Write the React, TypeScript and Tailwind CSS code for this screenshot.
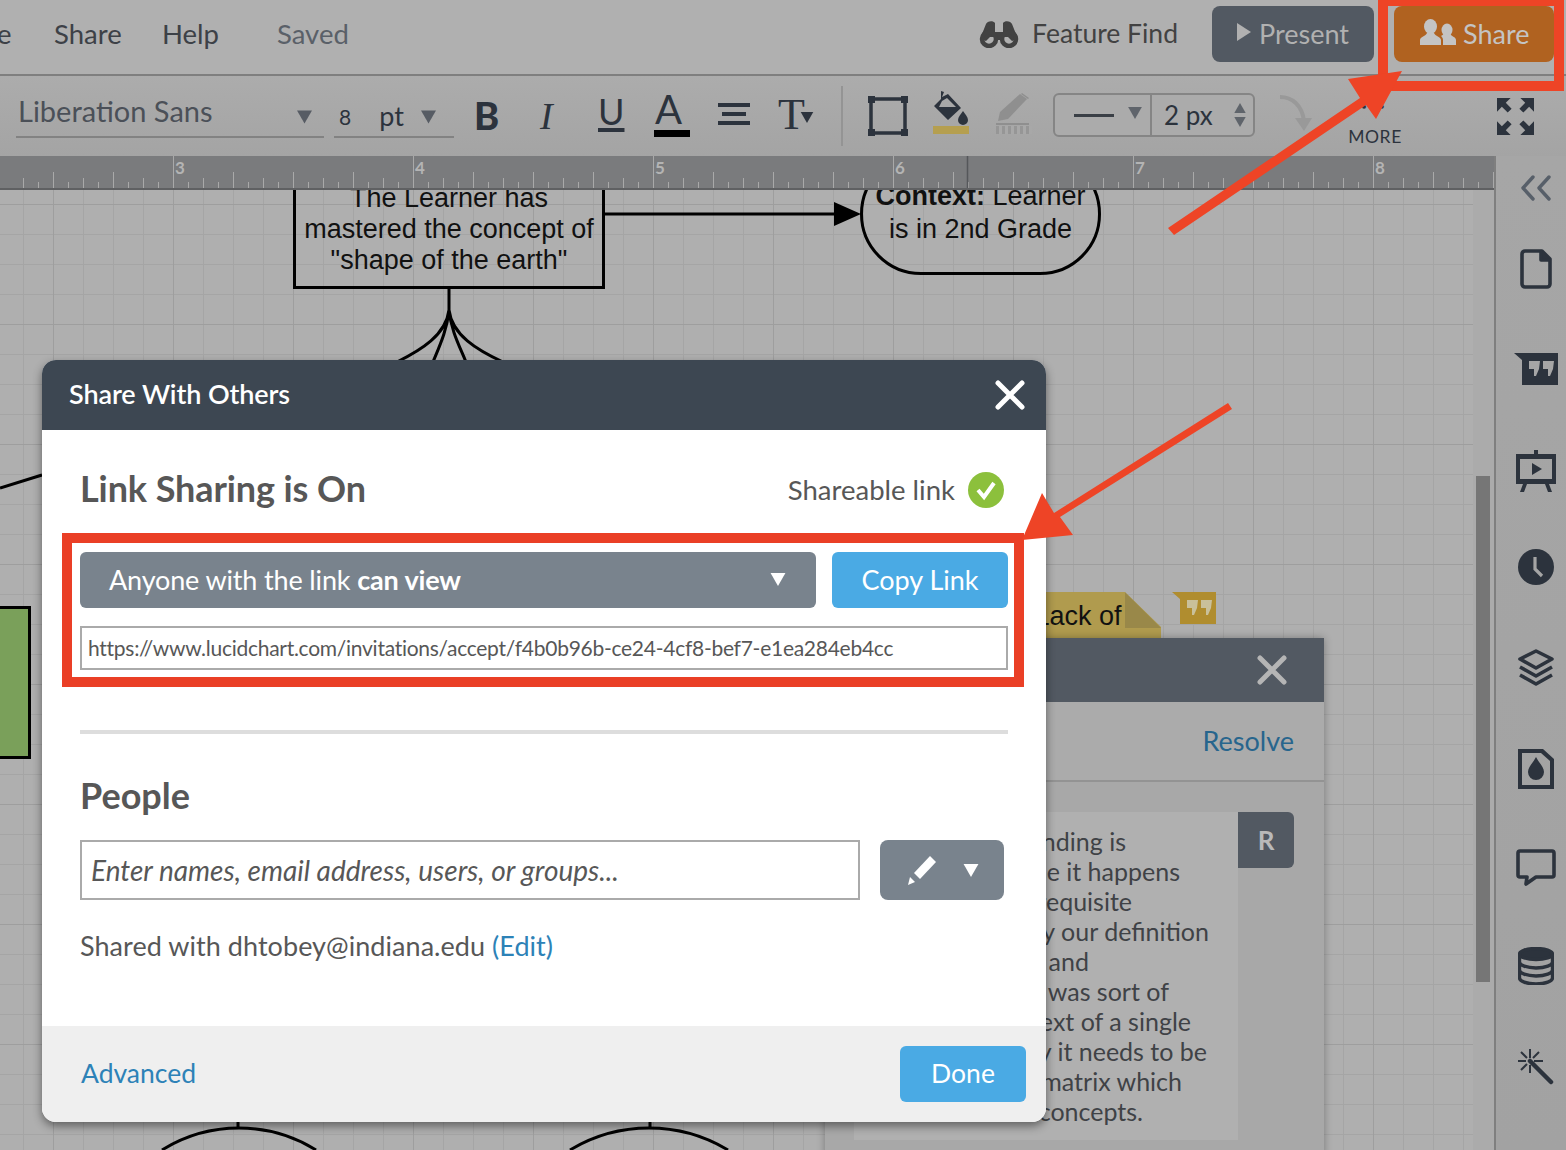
import React from 'react';

const ink = '#2c333d';

const Caret = ({ className }: { className: string }) => (
  <svg viewBox="0 0 16 14" className={className} fill="currentColor">
    <path d="M0 0h16L8 14z" />
  </svg>
);

const rulerTicks = Array.from({ length: 100 }, (_, i) => 23 + i * 15);

const Ruler = () => (
  <div className="relative h-[34px] bg-[#7a7b7d] border-b-[2px] border-[#5f6062]">
    <svg className="absolute left-0 top-0 w-[1494px] h-[32px]" viewBox="0 0 1494 32">
      {rulerTicks.map((x) => {
        const inch = (x - 173) % 240 === 0;
        const major = (x - 173) % 60 === 0;
        const half = (x - 173) % 30 === 0;
        return (
          <line
            key={x}
            x1={x + 0.5}
            x2={x + 0.5}
            y1={inch ? 0 : major ? 16 : half ? 22 : 26}
            y2={32}
            stroke="#a9a9a9"
          />
        );
      })}
      <line x1="967.5" x2="967.5" y1="0" y2="32" stroke="#55575a" strokeWidth="1.5" />
    </svg>
    {[
      ['3', 'left-[175px]'],
      ['4', 'left-[415px]'],
      ['5', 'left-[655px]'],
      ['6', 'left-[895px]'],
      ['7', 'left-[1135px]'],
      ['8', 'left-[1375px]'],
    ].map(([n, pos]) => (
      <span key={n} className={`absolute top-0 ${pos} text-[17px] leading-[24px] font-bold text-[#b4b4b4]`}>
        {n}
      </span>
    ))}
  </div>
);

const TopBar = () => (
  <header className="h-[76px] shrink-0 bg-[#b0b0b0] border-b-[2px] border-[#7f7f7f] flex items-start text-[#3d4147] text-[27.5px]">
    <span className="w-[54px] h-[68px] leading-[68px] -ml-[3px] overflow-hidden">e</span>
    <span className="w-[108px] h-[68px] leading-[68px] ml-[3px]">Share</span>
    <span className="w-[115px] h-[68px] leading-[68px]">Help</span>
    <span className="h-[68px] leading-[68px] text-[#5a6068]">Saved</span>
    <div className="ml-auto flex items-center h-[56px] mt-[6px] mr-[12px]">
      <svg viewBox="0 0 40 28" className="w-[40px] h-[28px] mr-[13px] -mt-[1px]" fill="#424242">
        <path d="M1 19L7 4c1-3 7-4 9-1v9h8V3c2-3 8-2 9 1l6 15-6 2-4-4h-6l-2 3h-4l-2-3H11l-4 4z" />
        <circle cx="10" cy="19" r="7" fill="none" stroke="#424242" strokeWidth="4.5" />
        <circle cx="30" cy="19" r="7" fill="none" stroke="#424242" strokeWidth="4.5" />
      </svg>
      <span className="mr-[34px] text-[#424242] text-[26.500px]">Feature Find</span>
      <button className="w-[162px] h-[56px] rounded-[8px] bg-[#525962] text-[#b1b1b1] text-[27px] flex items-center pl-[25px]">
        <svg viewBox="0 0 14 18" className="w-[14px] h-[18px] mr-[8px] -mt-[4px]" fill="currentColor">
          <path d="M0 0l14 9-14 9z" />
        </svg>
        <span>Present</span>
      </button>
      <button className="ml-[20px] w-[160px] h-[56px] rounded-[8px] bg-[#b06220] text-[#c4c4c4] text-[27px] flex items-center pl-[26px]">
        <svg viewBox="0 0 36 26" className="w-[36px] h-[26px] mr-[7px] -mt-[4px]" fill="currentColor">
          <ellipse cx="10.500" cy="7.500" rx="6.500" ry="7.500" />
          <path d="M0 26v-5c0-3 6-4 7-7h7c1 3 7 4 7 7v5z" />
          <ellipse cx="27" cy="11" rx="5.500" ry="6.500" />
          <path d="M23 26v-5c0-2-1-3-2-4l3-2h6c1 2 6 3 6 6v5z" />
        </svg>
        <span>Share</span>
      </button>
    </div>
  </header>
);

const ToolBar = () => (
  <div className="h-[80px] shrink-0 bg-[linear-gradient(#acacac,#a4a4a4)] flex items-start relative text-[#2c333d]">
    <div className="ml-[16px] mt-[17px] w-[308px] h-[45px] border-b-[2px] border-[#828282] flex items-start justify-between text-[#4b5058] text-[29px] pl-[2px] pr-[12px]">
      <span className="leading-[35px]">Liberation Sans</span>
      <Caret className="w-[15px] h-[14px] mt-[17px] text-[#575c64]" />
    </div>
    <div className="ml-[10px] mt-[17px] w-[120px] h-[45px] border-b-[2px] border-[#828282] flex items-start">
      <span className="ml-[5px] mt-[10px] text-[21px] leading-[28px]">8</span>
      <span className="ml-[28px] mt-[4px] text-[27px] leading-[38px]">pt</span>
      <Caret className="w-[15px] h-[14px] mt-[17px] ml-[17px] text-[#575c64]" />
    </div>
    <span className="ml-[20px] mt-[16px] text-[38px] leading-[46px] font-black w-[66px]">B</span>
    <span className="mt-[17px] font-['Liberation_Serif',serif] italic text-[38px] leading-[46px] w-[58px]">I</span>
    <span className="mt-[13px] text-[36px] leading-[44px] w-[56px] underline decoration-[4px] underline-offset-[3px]">U</span>
    <div className="mt-[11px] w-[64px] flex flex-col">
      <span className="text-[40px] leading-[44px] pl-[1px]">A</span>
      <span className="block w-[36px] h-[7px] -mt-[1px] bg-black" />
    </div>
    <div className="mt-[27px] w-[60px] flex flex-col gap-[5px]">
      <span className="block w-[32px] h-[4px] bg-[#2c333d]" />
      <span className="block w-[24px] h-[4px] bg-[#2c333d] ml-[4px]" />
      <span className="block w-[32px] h-[4px] bg-[#2c333d]" />
    </div>
    <div className="mt-[14px] w-[63px] flex items-start">
      <span className="font-['Liberation_Serif',serif] text-[44px] leading-[50px]">T</span>
      <Caret className="w-[16px] h-[11px] mt-[22px] -ml-[6px]" />
    </div>
    <span className="block w-[2px] h-[60px] mt-[10px] bg-[#949494]" />
    <svg viewBox="0 0 40 40" className="ml-[25px] mt-[20px] w-[40px] h-[40px]" fill="none" stroke={ink}>
      <rect x="3" y="3" width="34" height="34" strokeWidth="3.5" />
      <path d="M0 0h7v7H0zM33 0h7v7h-7zM0 33h7v7H0zM33 33h7v7h-7z" fill={ink} stroke="none" />
    </svg>
    <div className="ml-[25px] mt-[13px] w-[36px] flex flex-col">
      <svg viewBox="0 0 36 36" className="w-[36px] h-[36px]" fill={ink}>
        <path d="M8 2l3 1-2 5 6-3 13 14-13 12L1 17l7-7z" />
        <path d="M30 22c2 3 5 6 5 9a5 5 0 0 1-10 0c0-3 3-6 5-9z" />
        <path d="M9 12l5-3 9 9H6z" fill="#a8a8a8" />
      </svg>
      <span className="block w-[36px] h-[8px] mt-[1px] bg-[#b59f50]" />
    </div>
    <div className="ml-[27px] mt-[16px] w-[36px] flex flex-col">
      <svg viewBox="0 0 36 28" className="w-[36px] h-[30px]" fill="#8f8f8f">
        <path d="M24 1l7 5-19 20-10 2 2-9z" />
        <path d="M26 0l7 5-1 1-7-5z" />
      </svg>
      <span className="block w-[33px] h-[2px] mt-[1px] bg-[#8f8f8f]" />
      <span className="block w-[36px] h-[8px] mt-[1px] bg-[repeating-linear-gradient(90deg,#969696_0,#969696_3px,#a8a8a8_3px,#a8a8a8_6px)]" />
    </div>
    <div className="ml-[21px] mt-[17px] w-[202px] h-[44px] rounded-[6px] border-[2px] border-[#858585] bg-[#ababab] flex items-stretch">
      <div className="w-[97px] border-r-[2px] border-[#858585] flex items-center pl-[19px]">
        <span className="block w-[40px] h-[3px] bg-[#3a3f46]" />
        <Caret className="w-[16px] h-[12px] ml-[13px] -mt-[4px] text-[#5f646b]" />
      </div>
      <div className="flex-1 flex items-center pl-[12px] text-[26px]">
        <span className="flex-1 mt-[1px]">2 px</span>
        <div className="flex flex-col gap-[4px] mr-[7px]">
          <Caret className="w-[12px] h-[10px] rotate-180 text-[#5f646b]" />
          <Caret className="w-[12px] h-[10px] text-[#5f646b]" />
        </div>
      </div>
    </div>
    <svg viewBox="0 0 34 40" className="ml-[24px] mt-[18px] w-[34px] h-[40px]" fill="none">
      <path d="M1 3c12 0 22 8 24 24" stroke="#999" strokeWidth="4" />
      <path d="M16 24h17l-8 13z" fill="#999" />
    </svg>
    <div className="ml-[35px] mt-[22px] w-[54px] flex flex-col items-center">
      <span className="text-[8px] leading-[16px] tracking-[4px]">●●●</span>
      <span className="text-[17.500px] leading-[24px] tracking-[0.6px] mt-[11px] whitespace-nowrap">MORE</span>
    </div>
    <svg viewBox="0 0 38 38" className="ml-[95px] mt-[22px] w-[37px] h-[37px]" fill={ink}>
      <path d="M0 0h14l-5 5 6 6-4 4-6-6-5 5zM38 0v14l-5-5-6 6-4-4 6-6-5-5zM0 38V24l5 5 6-6 4 4-6 6 5 5zM38 38H24l5-5-6-6 4-4 6 6 5-5z" />
    </svg>
  </div>
);

const SideIcon = ({ children, className }: { children: React.ReactNode; className: string }) => (
  <div className={`w-[60px] flex items-center justify-center ${className}`}>{children}</div>
);

const SideBar = () => (
  <aside className="w-[72px] shrink-0 border-l-[2px] border-[#7f7f7f] bg-[linear-gradient(#a6a6a6,#a2a2a2)] flex flex-col pl-[10px] pt-[14px]">
    <SideIcon className="h-[36px] mb-[43px]">
      <svg viewBox="0 0 32 26" className="w-[32px] h-[26px]" fill="none" stroke="#575f69" strokeWidth="3.4" strokeLinecap="round" strokeLinejoin="round">
        <path d="M13 2L3 13l10 11M29 2L19 13l10 11" />
      </svg>
    </SideIcon>
    <SideIcon className="h-[40px] mb-[60px]">
      <svg viewBox="0 0 32 40" className="w-[32px] h-[40px]" fill="none" stroke={ink} strokeWidth="3.6" strokeLinejoin="round">
        <path d="M5 2h17l8 8v25a3 3 0 0 1-3 3H5a3 3 0 0 1-3-3V5a3 3 0 0 1 3-3z" />
        <path d="M21 2v9h9" fill={ink} />
      </svg>
    </SideIcon>
    <SideIcon className="h-[40px] mb-[60px]">
      <svg viewBox="0 0 44 32" className="w-[44px] h-[32px]" fill={ink}>
        <path d="M0 0h44v32H8V7z" />
        <path d="M15 8h11l-1 8-3 7h-2v-7h-5zM29 8h11l-1 8-3 7h-2v-7h-5z" fill="#a6a6a6" />
      </svg>
    </SideIcon>
    <SideIcon className="h-[44px] mb-[56px]">
      <svg viewBox="0 0 40 42" className="w-[40px] h-[42px]" fill={ink}>
        <rect x="18" y="0" width="4" height="6" />
        <path d="M0 4h40v30H0zM4 9v20h32V9z" fillRule="evenodd" />
        <path d="M16 13l10 6-10 6z" />
        <path d="M7 34h4l-3 8H4zM29 34h4l3 8h-4z" />
      </svg>
    </SideIcon>
    <SideIcon className="h-[36px] mb-[64px]">
      <svg viewBox="0 0 36 36" className="w-[36px] h-[36px]">
        <circle cx="18" cy="18" r="18" fill={ink} />
        <path d="M17 8v12l7 7" fill="none" stroke="#a5a5a5" strokeWidth="3.2" />
      </svg>
    </SideIcon>
    <SideIcon className="h-[38px] mb-[62px]">
      <svg viewBox="0 0 36 38" className="w-[36px] h-[38px]" fill="none" stroke={ink} strokeWidth="3.6" strokeLinejoin="round">
        <path d="M18 2l16 8-16 9-16-9z" />
        <path d="M2 18l16 9 16-9M2 26l16 9 16-9" />
      </svg>
    </SideIcon>
    <SideIcon className="h-[40px] mb-[60px]">
      <svg viewBox="0 0 36 40" className="w-[36px] h-[40px]" fill={ink}>
        <path d="M0 0h25l11 10v30H0zM4 4v32h28V12l-9-8z" fillRule="evenodd" />
        <path d="M18 8c3 6 8 10 8 15a8 8 0 0 1-16 0c0-5 5-9 8-15z" />
      </svg>
    </SideIcon>
    <SideIcon className="h-[38px] mb-[60px]">
      <svg viewBox="0 0 40 38" className="w-[40px] h-[38px]" fill="none" stroke={ink} strokeWidth="3.6" strokeLinejoin="round">
        <path d="M4 2h32a2 2 0 0 1 2 2v22a2 2 0 0 1-2 2H20l-10 7 1-7H4a2 2 0 0 1-2-2V4a2 2 0 0 1 2-2z" />
      </svg>
    </SideIcon>
    <SideIcon className="h-[38px] mb-[64px]">
      <svg viewBox="0 0 36 38" className="w-[36px] h-[38px]" fill="none" stroke={ink} strokeWidth="3.400">
        <ellipse cx="18" cy="7" rx="16.500" ry="5.500" fill={ink} />
        <path d="M1.500 7v24c0 3 7 6 16.500 6s16.500-3 16.500-6V7M1.500 15c0 3 7 6 16.500 6s16.500-3 16.500-6M1.500 23c0 3 7 6 16.500 6s16.500-3 16.500-6" />
      </svg>
    </SideIcon>
    <SideIcon className="h-[36px]">
      <svg viewBox="0 0 36 36" className="w-[36px] h-[36px]" fill="none" stroke={ink}>
        <path d="M12 12l21 21" strokeWidth="4.500" strokeLinecap="round" />
        <path d="M12 0v9M12 16v8M0 12h8M16 12h9M3 3l6 6M21 3l-6 6M3 21l6-6" strokeWidth="2" />
      </svg>
    </SideIcon>
  </aside>
);

const commentLines = [
  ['Understanding is', 'w-[272px]'],
  ['because it happens', 'w-[326px]'],
  ['a prerequisite', 'w-[278px]'],
  ['Obviously our definition', 'w-[355px]'],
  ['and', 'w-[235px]'],
  ['mapping was sort of', 'w-[315px]'],
  ['context of a single', 'w-[337px]'],
  ['Finally it needs to be', 'w-[353px]'],
  ['a learning matrix which', 'w-[328px]'],
  ['of concepts.', 'w-[289px]'],
];

const CommentPanel = () => (
  <div className="absolute left-[825px] top-[448px] w-[499px] h-[520px] bg-[#a8a8a8] shadow-[0_0_8px_rgba(0,0,0,0.3)] flex flex-col">
    <div className="h-[64px] shrink-0 bg-[#525962] flex items-center justify-end pr-[37px]">
      <svg viewBox="0 0 30 30" className="w-[30px] h-[30px]" stroke="#b5b5b5" strokeWidth="5" strokeLinecap="round">
        <path d="M3 3l24 24M27 3L3 27" />
      </svg>
    </div>
    <div className="h-[80px] shrink-0 border-b-[2px] border-[#939393] bg-[#ababab] flex items-center justify-end pr-[30px] text-[27px] text-[#27658d]">
      Resolve
    </div>
    <div className="flex items-start pl-[29px] pt-[30px]">
      <div className="w-[384px] h-[328px] bg-[#b0b0b0] pt-[14px] text-[25px] leading-[30px] text-[#3f4246]">
        {commentLines.map(([line, w]) => (
          <div key={line} className={`${w} text-right whitespace-nowrap`}>
            {line}
          </div>
        ))}
      </div>
      <div className="w-[56px] h-[56px] rounded-r-[6px] bg-[#525962] text-[#b9b9b9] text-[26px] font-bold flex items-center justify-center">
        R
      </div>
    </div>
  </div>
);

const Canvas = () => (
  <div className="relative flex-1 overflow-hidden bg-[#ababab]">
    <div className="absolute left-0 top-0 bottom-0 w-[1473px] bg-[#afafaf] bg-[linear-gradient(to_right,#9e9e9e_1px,transparent_1px),linear-gradient(to_bottom,#9e9e9e_1px,transparent_1px),linear-gradient(to_right,#a5a5a5_1px,transparent_1px),linear-gradient(to_bottom,#a5a5a5_1px,transparent_1px)] bg-size-[120px_120px,120px_120px,30px_30px,30px_30px] bg-position-[53px_0,0_14px,23px_0,0_14px]" />
    <div className="absolute left-[1476px] top-[286px] w-[14px] h-[506px] bg-[#767676]" />

    {/* diagram */}
    <div className="absolute left-[293px] -top-[10px] w-[312px] h-[109px] border-[3px] border-black font-['Liberation_Sans',sans-serif] text-[27px] leading-[31px] text-[#111] text-center whitespace-nowrap">
      The Learner has
      <br />
      mastered the concept of
      <br />
      "shape of the earth"
    </div>
    <div className="absolute left-[860px] -top-[37px] w-[241px] h-[122px] border-[3px] border-black rounded-[61px] font-['Liberation_Sans',sans-serif] text-[27px] leading-[33px] text-[#111] text-center pt-[24px] whitespace-nowrap">
      <b>Context:</b> Learner
      <br />
      is in 2nd Grade
    </div>
    <svg className="absolute left-0 top-0 w-[1473px] h-[960px]" viewBox="0 0 1473 960" fill="none" stroke="#000" strokeWidth="3">
      <path d="M605 24h235" />
      <path d="M834 12l27 12-27 12z" fill="#000" stroke="none" />
      <path d="M449 98v22c-3 25-28 40-52 52M449 98v22c-2 20-9 35-16 52M449 98v22c2 20 10 35 17 52M449 98v22c3 25 28 40 54 52" />
      <path d="M0 298l42-13" />
      <path d="M238 932v7M650 932v7" />
      <path d="M162 960A146 146 0 0 1 316 960M570 960A153 153 0 0 1 728 960" />
    </svg>
    <div className="absolute -left-[4px] top-[416px] w-[35px] h-[153px] bg-[#7aa05a] border-[3px] border-black" />

    {/* comment note */}
    <div className="absolute left-[1030px] top-[402px] w-[131px] h-[60px] bg-[#b09b4e] [clip-path:polygon(0_0,95px_0,131px_35px,131px_100%,0_100%)] text-[27px] leading-[48px] font-['Liberation_Sans',sans-serif] text-[#111] whitespace-nowrap">
      <span className="-ml-[3px]">&nbsp;Lack of</span>
      <svg viewBox="0 0 36 36" className="absolute left-[95px] top-0 w-[36px] h-[36px]" fill="#998849">
        <path d="M0 0l36 36H0z" />
      </svg>
    </div>
    <svg viewBox="0 0 44 32" className="absolute left-[1172px] top-[402px] w-[44px] h-[32px]" fill="#b08d2f">
      <path d="M0 0h44v32H8V7z" />
      <path d="M15 8h11l-1 8-3 7h-2v-7h-5zM29 8h11l-1 8-3 7h-2v-7h-5z" fill="#c9c09b" />
    </svg>
    <CommentPanel />
  </div>
);

const ShareModal = () => (
  <div className="absolute left-[42px] top-[360px] w-[1004px] h-[762px] rounded-[14px] bg-white overflow-hidden shadow-[0_4px_10px_rgba(0,0,0,0.45)] flex flex-col text-[#575757]">
    <div className="h-[70px] shrink-0 bg-[#3d4752] flex items-center justify-between pl-[27px] pr-[21px] text-white text-[27px] font-semibold">
      <span className="pb-[2px] tracking-[-0.1px]">Share With Others</span>
      <svg viewBox="0 0 30 30" className="w-[30px] h-[30px]" stroke="#fff" strokeWidth="5" strokeLinecap="round">
        <path d="M3 3l24 24M27 3L3 27" />
      </svg>
    </div>
    <div className="flex-1 px-[38px]">
      <div className="flex items-center justify-between h-[48px] mt-[36px] pr-[4px]">
        <span className="text-[36px] tracking-[-0.1px] font-bold pb-[4px]">Link Sharing is On</span>
        <div className="flex items-center gap-[13px] text-[27.500px]">
          Shareable link
          <svg viewBox="0 0 36 36" className="w-[36px] h-[36px]">
            <circle cx="18" cy="18" r="18" fill="#8cc03c" />
            <path d="M10 18l6 7 10-14" fill="none" stroke="#fff" strokeWidth="4" />
          </svg>
        </div>
      </div>
      <div className="flex gap-[16px] mt-[38px]">
        <div className="flex-1 h-[56px] rounded-[6px] bg-[#79838d] text-white text-[27px] tracking-[-0.15px] flex items-center justify-between pl-[29px] pr-[30px]">
          <span>
            Anyone with the link <b>can view</b>
          </span>
          <Caret className="w-[16px] h-[13px] -mt-[2px]" />
        </div>
        <div className="w-[176px] h-[56px] rounded-[6px] bg-[#4aaae4] text-white text-[27px] flex items-center justify-center">
          Copy Link
        </div>
      </div>
      <div className="mt-[18px] h-[44px] border-[2px] border-[#aaaaaa] pl-[6px] text-[21px] tracking-[-0.27px] leading-[40px] whitespace-nowrap">
        https://www.lucidchart.com/invitations/accept/f4b0b96b-ce24-4cf8-bef7-e1ea284eb4cc
      </div>
      <div className="mt-[60px] h-[4px] bg-[#dddddd]" />
      <div className="mt-[39px] text-[36px] leading-[44px] font-bold">People</div>
      <div className="mt-[23px] flex">
        <div className="w-[780px] h-[60px] border-[2px] border-[#aaaaaa] pl-[9px] italic text-[28px] leading-[56px]">
          Enter names, email address, users, or groups...
        </div>
        <div className="ml-[20px] w-[124px] h-[60px] rounded-[8px] bg-[#79838d] text-white flex items-center pl-[27px]">
          <svg viewBox="0 0 30 30" className="w-[30px] h-[30px]" fill="currentColor">
            <path d="M23 1l6 6-16 17-6-6z" />
            <path d="M3 22l5 5-7 3z" />
          </svg>
          <Caret className="w-[16px] h-[13px] ml-[26px]" />
        </div>
      </div>
      <div className="mt-[27px] text-[27px] tracking-[0.05px] leading-[38px]">
        Shared with dhtobey@indiana.edu <span className="text-[#2d82b7]">(Edit)</span>
      </div>
    </div>
    <div className="h-[96px] shrink-0 bg-[#efefef] flex items-center justify-between pl-[39px] pr-[20px] text-[26.500px]">
      <span className="text-[#2d82b7]">Advanced</span>
      <div className="w-[126px] h-[56px] rounded-[6px] bg-[#4aaae4] text-white flex items-center justify-center">Done</div>
    </div>
  </div>
);

const Annotations = () => (
  <>
    <div className="absolute left-[1378px] -top-[4px] w-[186px] h-[95px] border-[10px] border-[#ee4426]" />
    <div className="absolute left-[62px] top-[533px] w-[962px] h-[154px] border-[10px] border-[#ea3f26]" />
    <svg className="absolute left-0 top-0 w-[1566px] h-[1150px] pointer-events-none" viewBox="0 0 1566 1150" fill="#ee4426">
      <path d="M1402 71l-54 8 12 19-192 130 6 7 192-130 10 14z" />
      <path d="M1022 540l51-5-13-18 172-108-4-6-174 110-12-20z" />
    </svg>
  </>
);

export default function App() {
  return (
    <div className="relative w-[1566px] h-[1150px] overflow-hidden bg-[#afafaf] font-['Lato',sans-serif] flex flex-col">
      <TopBar />
      <ToolBar />
      <div className="flex-1 flex min-h-0">
        <div className="flex-1 flex flex-col min-w-0">
          <Ruler />
          <Canvas />
        </div>
        <SideBar />
      </div>
      <ShareModal />
      <Annotations />
    </div>
  );
}
